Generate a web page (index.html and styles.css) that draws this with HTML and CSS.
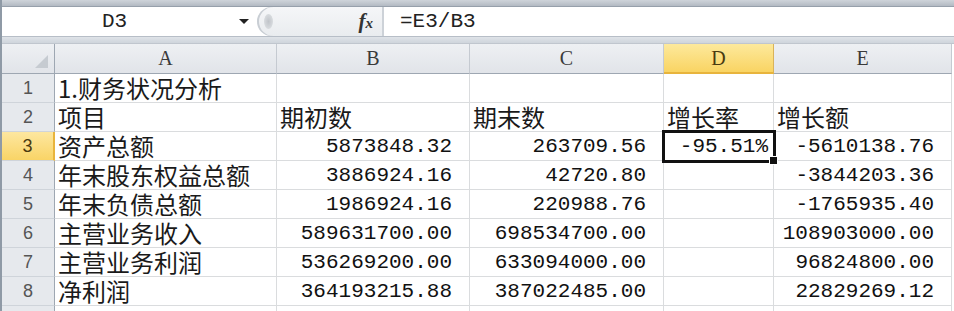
FILE: index.html
```html
<!DOCTYPE html>
<html lang="zh-CN">
<head>
  <meta charset="UTF-8">
  <title>财务状况分析</title>
  <link rel="stylesheet" href="styles.css">
</head>
<body>
  <div class="app">
    <div class="top-band"></div>

    <div class="formula-bar">
      <div class="name-box">
        <span class="name-box__text">D3</span>
        <span class="name-box__caret"></span>
      </div>
      <div class="fx-area">
        <span class="fx-area__grip"></span>
        <span class="fx-area__fx">f<span class="fx-area__x">x</span></span>
      </div>
      <div class="formula-text">=E3/B3</div>
    </div>

    <div class="separator"></div>

    <div class="sheet">
      <div class="hdr hdr--corner"><span class="corner-tri"></span></div>
      <div class="hdr hdr--col">A</div>
      <div class="hdr hdr--col">B</div>
      <div class="hdr hdr--col">C</div>
      <div class="hdr hdr--col hdr--active">D</div>
      <div class="hdr hdr--col">E</div>

      <div class="hdr hdr--row">1</div>
      <div class="cell cell--text">1.财务状况分析</div>
      <div class="cell"></div>
      <div class="cell"></div>
      <div class="cell"></div>
      <div class="cell"></div>

      <div class="hdr hdr--row">2</div>
      <div class="cell cell--text">项目</div>
      <div class="cell cell--text">期初数</div>
      <div class="cell cell--text">期末数</div>
      <div class="cell cell--text">增长率</div>
      <div class="cell cell--text">增长额</div>

      <div class="hdr hdr--row hdr--active-row">3</div>
      <div class="cell cell--text">资产总额</div>
      <div class="cell cell--num">5873848.32</div>
      <div class="cell cell--num">263709.56</div>
      <div class="cell cell--num cell--pct cell--selected">-95.51%<span class="fill-handle"></span></div>
      <div class="cell cell--num">-5610138.76</div>

      <div class="hdr hdr--row">4</div>
      <div class="cell cell--text">年末股东权益总额</div>
      <div class="cell cell--num">3886924.16</div>
      <div class="cell cell--num">42720.80</div>
      <div class="cell"></div>
      <div class="cell cell--num">-3844203.36</div>

      <div class="hdr hdr--row">5</div>
      <div class="cell cell--text">年末负债总额</div>
      <div class="cell cell--num">1986924.16</div>
      <div class="cell cell--num">220988.76</div>
      <div class="cell"></div>
      <div class="cell cell--num">-1765935.40</div>

      <div class="hdr hdr--row">6</div>
      <div class="cell cell--text">主营业务收入</div>
      <div class="cell cell--num">589631700.00</div>
      <div class="cell cell--num">698534700.00</div>
      <div class="cell"></div>
      <div class="cell cell--num">108903000.00</div>

      <div class="hdr hdr--row">7</div>
      <div class="cell cell--text">主营业务利润</div>
      <div class="cell cell--num">536269200.00</div>
      <div class="cell cell--num">633094000.00</div>
      <div class="cell"></div>
      <div class="cell cell--num">96824800.00</div>

      <div class="hdr hdr--row">8</div>
      <div class="cell cell--text">净利润</div>
      <div class="cell cell--num">364193215.88</div>
      <div class="cell cell--num">387022485.00</div>
      <div class="cell"></div>
      <div class="cell cell--num">22829269.12</div>

      <div class="hdr hdr--row"></div>
      <div class="cell"></div>
      <div class="cell"></div>
      <div class="cell"></div>
      <div class="cell"></div>
      <div class="cell"></div>
    </div>
  </div>
</body>
</html>
```

FILE: styles.css
```css
html, body {
  margin: 0;
  padding: 0;
  background: #ffffff;
  overflow: hidden;
}

body {
  font-family: "Noto Sans CJK SC", sans-serif;
  color: #111;
}

.app {
  width: 954px;
  height: 311px;
  overflow: hidden;
  border-left: 2px solid #8f9aa6;
  box-sizing: border-box;
}

.top-band {
  height: 7px;
  background: linear-gradient(#cfd4da, #b3bac3);
  border-bottom: 1px solid #97a0ab;
  box-sizing: border-box;
}

/* formula bar */
.formula-bar {
  display: flex;
  height: 30px;
  background: #fff;
  border-bottom: 1px solid #b7bec7;
  box-sizing: border-box;
}

.name-box {
  width: 255px;
  display: flex;
  align-items: center;
}

.name-box__text {
  flex: 1;
  text-align: center;
  padding-left: 8px;
  padding-right: 20px;
  font-family: "Liberation Mono", monospace;
  font-size: 21px;
  color: #222;
}

.name-box__caret {
  width: 0;
  height: 0;
  margin-right: 8px;
  border-left: 5px solid transparent;
  border-right: 5px solid transparent;
  border-top: 5px solid #222;
}

.fx-area {
  width: 127px;
  display: flex;
  align-items: center;
  justify-content: space-between;
  background: linear-gradient(#f5f6f8, #e9ecef);
  border-right: 2px solid #cdd2d8;
  border-radius: 15px 0 0 15px;
  box-shadow: inset 2px 0 0 #c9ced4;
  padding-right: 9px;
  box-sizing: border-box;
}

.fx-area__grip {
  width: 9px;
  height: 15px;
  margin-left: 7px;
  border-radius: 50%;
  background: radial-gradient(#c0c4c9, #e2e5e8);
}

.fx-area__fx {
  font-family: "Liberation Serif", serif;
  font-style: italic;
  font-weight: bold;
  font-size: 21px;
  color: #333;
}

.fx-area__x {
  font-size: 15px;
}

.formula-text {
  flex: 1;
  padding-left: 16px;
  font-family: "Liberation Mono", monospace;
  font-size: 21px;
  line-height: 30px;
  color: #222;
}

.separator {
  height: 7px;
  background: linear-gradient(#dfe3e8, #cfd5dc);
  border-bottom: 1px solid #c0c6ce;
  box-sizing: border-box;
}

/* sheet grid */
.sheet {
  display: grid;
  grid-template-columns: 53px 222px 193px 194px 110px 178px;
  grid-template-rows: 30px repeat(9, 29px);
}

.hdr {
  box-sizing: border-box;
  border-right: 1px solid #c5cad1;
  border-bottom: 1px solid #c5cad1;
  background: linear-gradient(#eef0f3, #e1e4e9);
  display: flex;
  align-items: center;
  justify-content: center;
  color: #3a3a3a;
}

.hdr--corner {
  position: relative;
  border-right-color: #9ea7b2;
  border-bottom-color: #9ea7b2;
}

.corner-tri {
  position: absolute;
  right: 6px;
  bottom: 5px;
  width: 0;
  height: 0;
  border-left: 13px solid transparent;
  border-bottom: 13px solid #c6cbd1;
}

.hdr--col {
  font-family: "Liberation Serif", serif;
  font-size: 20px;
  border-bottom-color: #9ea7b2;
}

.hdr--active {
  background: linear-gradient(#fde99c, #f9d463);
  border-bottom: 2px solid #e8b43c;
  border-right-color: #d9b35a;
  color: #4a3a10;
}

.hdr--row {
  font-family: "Liberation Sans", sans-serif;
  font-size: 18px;
  color: #555;
  background: #e6e9ed;
  border-right-color: #9ea7b2;
  border-bottom-color: #cfd4da;
}

.hdr--active-row {
  background: linear-gradient(#fde7a0, #f9d466);
  border-right: 2px solid #e8b43c;
  color: #4a3a10;
}

.cell {
  box-sizing: border-box;
  border-right: 1px solid #dadcde;
  border-bottom: 1px solid #dadcde;
  display: flex;
  align-items: flex-end;
  white-space: nowrap;
  color: #111;
}

.cell--text {
  font-size: 24px;
  line-height: 24px;
  padding-left: 3px;
  padding-bottom: 2px;
  color: #1a1a1a;
}

.cell--num {
  justify-content: flex-end;
  padding-right: 17px;
  padding-bottom: 3px;
  font-family: "Liberation Mono", monospace;
  font-size: 21px;
  line-height: 20px;
}

.cell--pct {
  padding-right: 5px;
}

.cell--selected {
  position: relative;
  outline: 3px solid #111;
  outline-offset: -1px;
  z-index: 1;
}

.fill-handle {
  position: absolute;
  right: -5px;
  bottom: -5px;
  width: 7px;
  height: 7px;
  background: #111;
  border: 1px solid #fff;
}
```
